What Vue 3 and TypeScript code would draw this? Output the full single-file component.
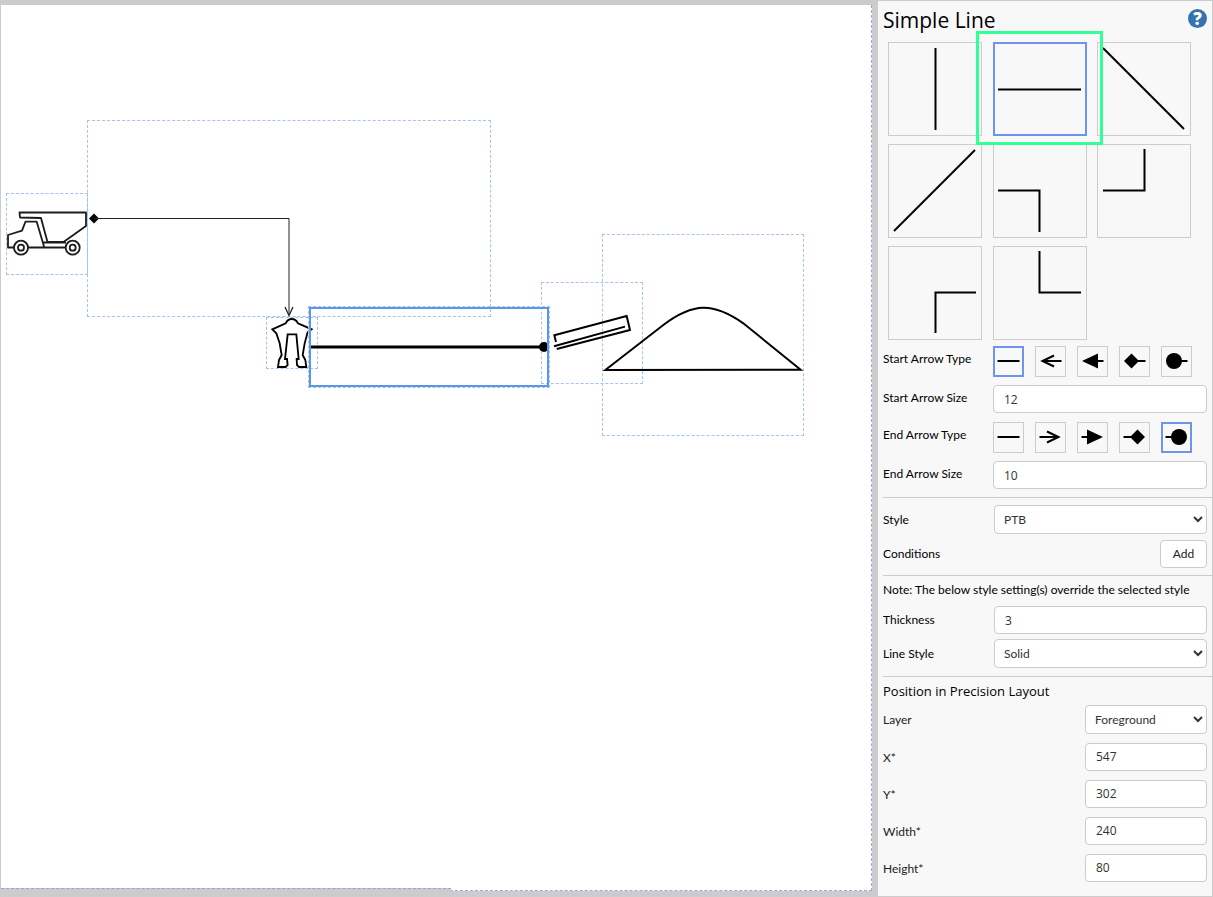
<script setup lang="ts">
import { ref } from 'vue'

interface Shape { id: string; label: string; points: string }
interface Box { id: string; x: number; y: number; w: number; h: number }

const shapes: Shape[] = [
  { id: 'vertical', label: 'Vertical line', points: '41.5,0 41.5,82' },
  { id: 'horizontal', label: 'Horizontal line', points: '-1,41.5 82,41.5' },
  { id: 'down', label: 'Diagonal down', points: '0,0 81,81' },
  { id: 'up', label: 'Diagonal up', points: '0,81 81,0' },
  { id: 'right-down', label: 'Elbow right then down', points: '-1,40.5 40.5,40.5 40.5,82' },
  { id: 'right-up', label: 'Elbow right then up', points: '0,40.5 41.5,40.5 41.5,-1' },
  { id: 'up-right', label: 'Elbow up then right', points: '41.5,81 41.5,40.5 82,40.5' },
  { id: 'down-right', label: 'Elbow down then right', points: '40.5,-1 40.5,40.5 82,40.5' },
]
const arrows = ['none', 'open', 'triangle', 'diamond', 'circle']

const boxes: Box[] = [
  { id: 'truck', x: 5, y: 188, w: 82, h: 82 },
  { id: 'connector', x: 86, y: 115, w: 404, h: 197 },
  { id: 'digger', x: 265, y: 312, w: 52, h: 52 },
  { id: 'conveyor', x: 540, y: 277, w: 102, h: 102 },
  { id: 'stockpile', x: 601, y: 229, w: 202, h: 202 },
]
const place = (b: Box) => ({
  left: `${b.x}px`, top: `${b.y}px`, width: `${b.w}px`, height: `${b.h}px`,
})
const selection: Box = { id: 'line', x: 308, y: 302, w: 240, h: 80 }

const shape = ref('horizontal')
const startArrow = ref('none')
const endArrow = ref('circle')
const startSize = ref('12')
const endSize = ref('10')
const lineClass = ref('PTB')
const thickness = ref('3')
const lineStyle = ref('Solid')
const layer = ref('Foreground')
const position = ref([
  { id: 'x', label: 'X*', value: '547' },
  { id: 'y', label: 'Y*', value: '302' },
  { id: 'width', label: 'Width*', value: '240' },
  { id: 'height', label: 'Height*', value: '80' },
])
const arrowRows = [
  { id: 'start', label: 'Start Arrow', type: startArrow, size: startSize },
  { id: 'end', label: 'End Arrow', type: endArrow, size: endSize },
]
</script>

<template>
  <div class="editor">
    <main class="workspace">
      <div class="canvas">
        <div v-for="b in boxes" :key="b.id" class="node" :style="place(b)"></div>
        <svg class="drawing" width="870" height="885" viewBox="1 5 870 885" aria-hidden="true">
          <g fill="none" stroke="#1c1c1c" stroke-width="1.8" stroke-linejoin="round">
            <path d="M19.500 212.500H86V226L63.500 242H47.500L41 218L20 217.500Z" />
            <path d="M14 247.500H8V235L22 230.700L25.500 221.700H36.700L44.300 247.500M28 247.500H66M43.500 242.500H66" />
            <circle cx="21" cy="247.700" r="7" fill="#fff" />
            <circle cx="21" cy="247.700" r="3" />
            <circle cx="72.700" cy="247.700" r="7" fill="#fff" />
            <circle cx="72.700" cy="247.700" r="3" />
          </g>
          <path d="M89 218.500L94 213.500L99 218.500L94 223.500Z" />
          <path d="M94 218.500H289V315" fill="none" stroke="#222" />
          <path d="M285 307L289 315.500L293 307" fill="none" stroke="#222" stroke-width="1.3" />
          <g transform="translate(255 295) scale(.3333)" fill="none" stroke="#000" stroke-width="5.500">
            <path d="M52 103L92 85Q98 72 110 72Q123 72 129 85L170 103L158 112L149 145L143 180L151 195L154 216H132L126 210L125 192H131L124 118H98L90 192H96L98 210L92 216H69L72 195L80 180L74 145L64 115Z" />
          </g>
          <g transform="translate(530 270) scale(.3333)" fill="none" stroke="#000" stroke-width="6">
            <path d="M78 216L73 196L290 138L300 180L80 237M72 229L285 170" />
            <path d="M226 300L400 165C490 97 550 97 640 160L812 299Z" />
          </g>
          <path d="M310 347H542" stroke="#000" stroke-width="3" />
          <circle cx="544" cy="347" r="5" />
        </svg>
        <div class="node selected" :style="place(selection)"></div>
      </div>
    </main>

    <aside class="panel">
      <header class="head">
        <h1>Simple Line</h1>
        <button class="help" type="button" aria-label="Help">?</button>
      </header>

      <div class="shapes">
        <div v-for="s in shapes" :key="s.id" class="cell">
          <button type="button" class="tile" :class="{ on: shape === s.id }" :aria-label="s.label" @click="shape = s.id">
            <svg width="82" height="82" viewBox="0 0 82 82">
              <polyline :points="s.points" fill="none" stroke="#000" stroke-width="2" />
            </svg>
          </button>
          <span v-if="s.id === 'horizontal'" class="highlight"></span>
        </div>
      </div>

      <section v-for="r in arrowRows" :key="r.id" class="arrow-group">
        <div class="row top">
          <span :id="r.id + '-type'" class="label">{{ r.label }} Type</span>
          <div class="arrows" role="group" :aria-labelledby="r.id + '-type'">
            <button
              v-for="a in arrows" :key="a" type="button" class="arrow"
              :class="{ on: r.type.value === a }" :aria-label="a" @click="r.type.value = a"
            >
              <svg width="21" height="21" viewBox="0 0 21 21" :class="{ flip: r.id === 'end' }">
                <path v-if="a === 'none'" d="M-.5 10H21.500" stroke="#000" stroke-width="2" />
                <path v-else-if="a === 'open'" d="M2 10H21.500M14 4.500L2.500 10L14 15.500" fill="none" stroke="#000" stroke-width="2" />
                <template v-else>
                  <path d="M8 10H21.500" stroke="#000" stroke-width="2" />
                  <path v-if="a === 'triangle'" d="M0 10L16 2.500V17.500Z" />
                  <path v-else-if="a === 'diamond'" d="M0 10L7.500 2.500L15 10L7.500 17.500Z" />
                  <circle v-else cx="8" cy="10" r="8" />
                </template>
              </svg>
            </button>
          </div>
        </div>
        <div class="row top">
          <label :for="r.id + '-size'" class="label">{{ r.label }} Size</label>
          <input :id="r.id + '-size'" v-model="r.size.value" type="text" />
        </div>
      </section>

      <section class="block styles">
        <div class="row">
          <label for="style">Style</label>
          <select id="style" v-model="lineClass"><option>PTB</option></select>
        </div>
        <div class="row">
          <span>Conditions</span>
          <button type="button" class="add">Add</button>
        </div>
      </section>

      <section class="block">
        <p class="note">Note: The below style setting(s) override the selected style</p>
        <div class="row">
          <label for="thickness">Thickness</label>
          <input id="thickness" v-model="thickness" type="text" />
        </div>
        <div class="row line-style">
          <label for="line-style">Line Style</label>
          <select id="line-style" v-model="lineStyle"><option>Solid</option><option>Dashed</option></select>
        </div>
      </section>

      <section class="block position">
        <h2>Position in Precision Layout</h2>
        <div class="row narrow">
          <label for="layer">Layer</label>
          <select id="layer" v-model="layer"><option>Foreground</option><option>Background</option></select>
        </div>
        <div v-for="p in position" :key="p.id" class="row narrow coord">
          <label :for="p.id">{{ p.label }}</label>
          <input :id="p.id" v-model="p.value" type="text" />
        </div>
      </section>
    </aside>
  </div>
</template>

<style>
body {
  margin: 0;
  background: #ccc;
}
</style>

<style scoped>
* {
  box-sizing: border-box;
}
.editor {
  display: grid;
  grid-template-columns: minmax(0, 1fr) 335px;
  min-height: 100vh;
  background: #ccc;
  color: #000;
  font: 12px/16px "Segoe UI", Lato, "Open Sans", sans-serif;
}
.workspace {
  display: flex;
  padding: 5px 6px 6px 1px;
}
.canvas {
  position: relative;
  flex: 1;
  background: #fff;
  border-right: 1px dashed #8fabf0;
  border-bottom: 1px dashed #8fabf0;
}
.canvas::after {
  content: "";
  position: absolute;
  left: 0;
  bottom: -1px;
  width: 450px;
  height: 2px;
  background: #ccc;
  border-top: 1px dashed #8fa5e0;
}
.drawing {
  position: relative;
  display: block;
}
.node {
  position: absolute;
  border: 1px dashed #a3c4f3;
}
.selected {
  border: 2px solid #5b97e8;
  outline: 1px dashed #a3c4f3;
}
.panel {
  padding: 0 0 14px 5px;
  background: #f8f8f8;
  border: solid #ccc;
  border-width: 1px 1px 1px 0;
}
.head {
  display: flex;
  justify-content: space-between;
  align-items: flex-start;
  height: 41px;
  padding: 5px 5px 0 0;
}
h1 {
  margin: 0;
  font: 400 21px/28px "Segoe UI", "Open Sans", sans-serif;
}
.help {
  width: 19px;
  height: 19px;
  margin-top: 3px;
  padding: 0;
  border: 0;
  border-radius: 50%;
  background: #3572b0;
  color: #fff;
  font: 800 17px/19px "Open Sans", sans-serif;
}
.shapes {
  display: grid;
  grid-template-columns: repeat(3, 94px);
  justify-content: space-between;
  row-gap: 8px;
  margin: 0 21px 6px 5px;
}
.cell {
  position: relative;
  height: 94px;
}
.tile,
.arrow {
  display: grid;
  place-content: center;
  width: 100%;
  height: 100%;
  padding: 0;
  border: 1px solid #ccc;
  background: #f8f8f8;
}
.tile.on,
.arrow.on {
  border: 2px solid #7094ec;
}
svg {
  overflow: visible;
}
.flip {
  transform: scaleX(-1);
}
.highlight {
  position: absolute;
  inset: -11px -16px -9px -17px;
  z-index: 1;
  border: 3px solid #33ff99;
  pointer-events: none;
}
.row {
  display: grid;
  grid-template-columns: 111px minmax(0, 1fr);
  align-items: center;
  padding-right: 5px;
}
.row.top {
  grid-template-columns: 110px minmax(0, 1fr);
  align-items: start;
}
.row.narrow {
  grid-template-columns: minmax(0, 1fr) 122px;
}
.label {
  line-height: 26px;
}
.arrow-group {
  display: grid;
  gap: 8px;
  margin-bottom: 8px;
}
.arrow-group + .arrow-group {
  margin-top: 9px;
}
.arrows {
  display: flex;
  gap: 11px;
}
.arrow {
  width: 31px;
  height: 31px;
}
input,
select,
.add {
  width: 100%;
  height: 28px;
  margin: 0;
  border: 1px solid #ccc;
  border-radius: 4px;
  background: #fff;
  color: #333;
  font: inherit;
}
input {
  padding: 0 10px;
  font-family: "Segoe UI", "Open Sans", sans-serif;
}
select {
  height: 29px;
  padding: 0 5px;
}
.add {
  justify-self: end;
  width: 47px;
  padding: 0;
  color: #222;
}
.block {
  padding-bottom: 7px;
  border-top: 1px solid #ccc;
}
.styles {
  display: grid;
  gap: 6px;
  padding-top: 7px;
}
.note {
  margin: 0;
  line-height: 28px;
  padding-bottom: 2px;
}
.line-style {
  margin: 5px 0 1px;
}
h2 {
  margin: 0;
  font: 400 13px/28px "Segoe UI", "Open Sans", sans-serif;
  color: #000;
}
.position {
  color: #222;
  padding-bottom: 0;
}
.coord {
  height: 29px;
  margin-top: 8px;
}
.coord label {
  padding-top: 2px;
}
</style>
